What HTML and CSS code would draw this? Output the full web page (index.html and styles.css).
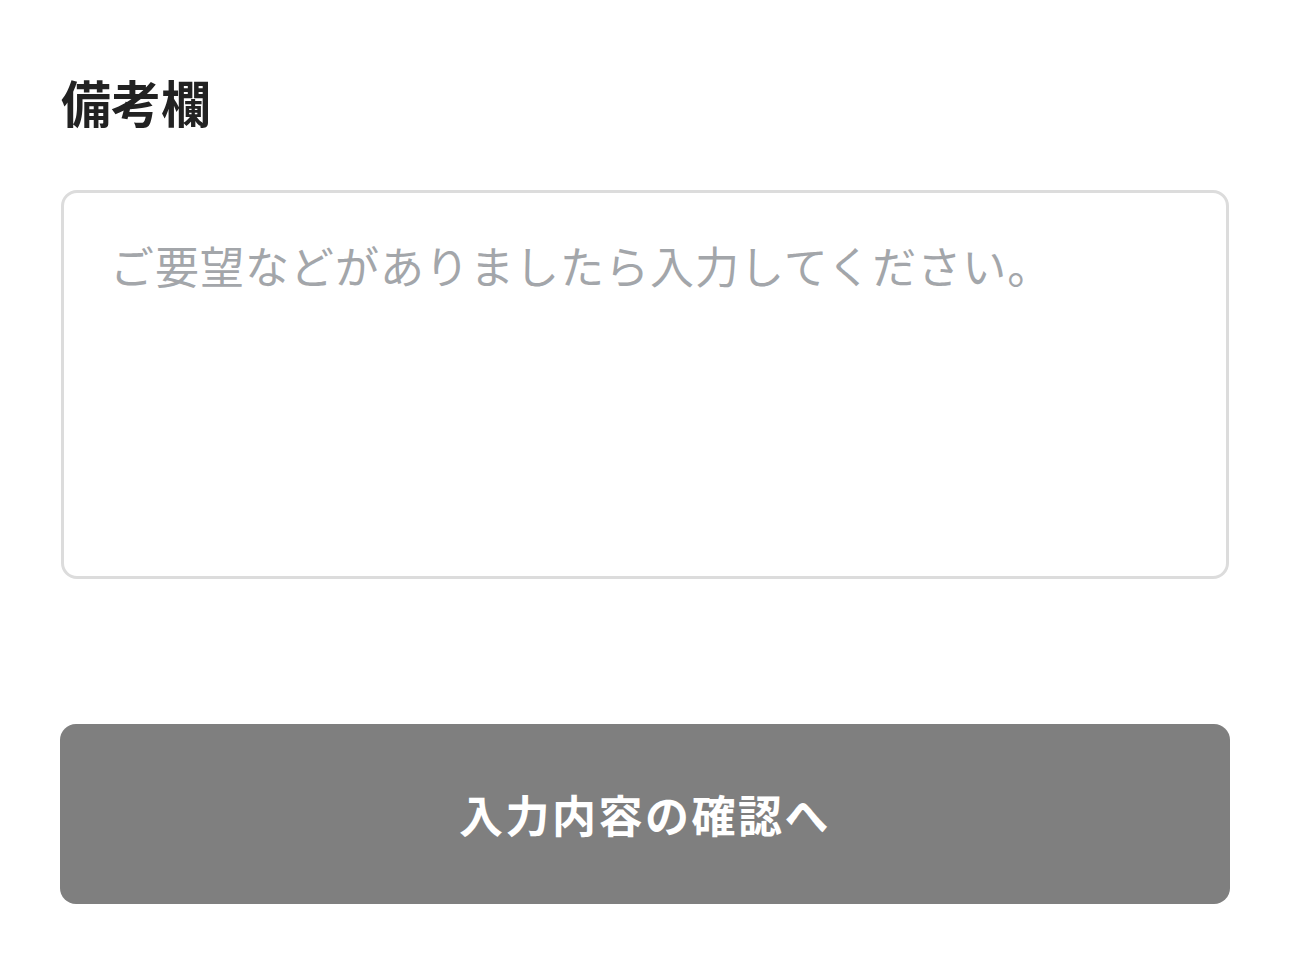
FILE: index.html
```html
<!DOCTYPE html>
<html lang="ja">
<head>
    <meta charset="UTF-8">
    <meta name="viewport" content="width=device-width, initial-scale=1.0">
    <title>備考欄</title>
    <link rel="stylesheet" href="styles.css">
</head>
<body>
    <form class="container">
        <h2>備考欄</h2>
        <textarea name="note" placeholder="ご要望などがありましたら入力してください。"></textarea>
        <button type="submit">入力内容の確認へ</button>
    </form>
</body>
</html>
```
FILE: styles.css
```css
body {
    font-family: "Noto Sans CJK JP", "Noto Sans", sans-serif;
    background: #fff;
    margin: 0;
    padding: 0;
}
.container {
    display: flex;
    flex-direction: column;
    padding: 71px 60px 0 60px;
}
h2 {
    margin: 0 0 59px 1px;
    font-size: 50px;
    line-height: 60px;
    font-weight: bold;
    color: #222;
}
textarea {
    box-sizing: border-box;
    height: 389px;
    margin: 0 1px;
    padding: 42px 46px;
    border: 3px solid #dcdcdc;
    border-radius: 16px;
    font-family: inherit;
    font-size: 44px;
    line-height: 60px;
    letter-spacing: 1px;
    color: #333;
    resize: none;
    outline: none;
}
textarea::placeholder {
    color: #a3a6aa;
}
button {
    margin-top: 145px;
    height: 180px;
    background: #7f7f7f;
    color: #fff;
    border: none;
    border-radius: 16px;
    font-family: inherit;
    font-size: 44px;
    font-weight: bold;
    letter-spacing: 2.5px;
    cursor: pointer;
}
```
